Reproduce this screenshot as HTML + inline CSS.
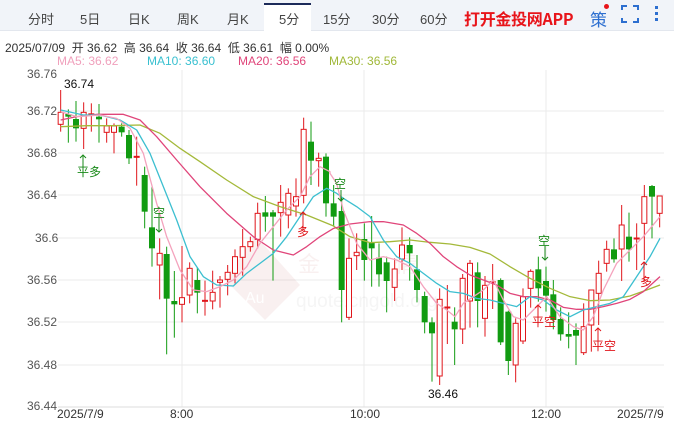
<!DOCTYPE html>
<html><head><meta charset="utf-8"><style>
*{margin:0;padding:0;box-sizing:border-box}
body{width:674px;height:422px;background:#fff;font-family:"Liberation Sans","Noto Sans CJK SC",sans-serif;position:relative;overflow:hidden}
.bar{position:absolute;left:0;top:0;width:674px;height:31px;background:#f1f4f9;border-bottom:1px solid #e3e7ee}
.t{position:absolute;top:9px;font-size:13px;color:#444}
.sel{position:absolute;left:264px;top:3px;width:47px;height:29px;background:#fff;border-top:2px solid #1d2b5a}
.app{position:absolute;left:464px;top:6px;font-size:16px;font-weight:bold;color:#e8141a;font-family:"Noto Sans CJK SC",sans-serif;letter-spacing:-0.3px}
.info{position:absolute;left:5px;top:39px;font-size:12px;color:#333}
.ma{position:absolute;top:54px;font-size:12px}
svg{position:absolute;left:0;top:0}
</style></head><body>
<div class="bar"></div>
<div class="sel"></div>
<div class="t">分时</div>
<div class="t">5日</div>
<div class="t">日K</div>
<div class="t">周K</div>
<div class="t">月K</div>
<div class="t">5分</div>
<div class="t">15分</div>
<div class="t">30分</div>
<div class="t">60分</div>
<div class="app">打开金投网APP</div>
<div class="t" style="left:590px;top:6px;font-size:17px;color:#2d6fd0">策</div>
<div style="position:absolute;left:604px;top:4px;width:5px;height:5px;border-radius:50%;background:#e8141a"></div>
<svg width="674" height="422" id="s"></svg>
<div class="info">2025/07/09&nbsp; 开 36.62&nbsp; 高 36.64&nbsp; 收 36.64&nbsp; 低 36.61&nbsp; 幅 0.00%</div>
<div class="ma" style="left:57px;color:#f0a0bc">MA5: 36.62</div>
<div class="ma" style="left:147px;color:#38c0d0">MA10: 36.60</div>
<div class="ma" style="left:238px;color:#e0457a">MA20: 36.56</div>
<div class="ma" style="left:329px;color:#a0b838">MA30: 36.56</div>
<script>
var s=document.getElementById('s'),h='';
var tabs=document.querySelectorAll('.t');
var xs=[28,80,128,177,227,279,323,372,420];
for(var i=0;i<9;i++)tabs[i].style.left=xs[i]+'px';
h+='<g stroke="#2d6fd0" stroke-width="2" fill="none"><path d="M622 10v-4h5M633 6h5v4M638 18v4h-5M627 22h-5v-4"/></g>';
h+='<g fill="#2d6fd0"><rect x="655" y="6" width="3" height="3"/><rect x="655" y="12" width="3" height="3"/><rect x="655" y="18" width="3" height="3"/></g>';
var gy=[111,153,195,238,280,322,365];
gy.forEach(function(y){h+='<line x1="58" x2="664" y1="'+y+'" y2="'+y+'" stroke="#ebebeb"/>'});
[182,364,546].forEach(function(x){h+='<line x1="'+x+'" x2="'+x+'" y1="70" y2="407" stroke="#ebebeb"/>'});
h+='<line x1="58" x2="664" y1="407" y2="407" stroke="#ddd"/>';
var lab=['36.76','36.72','36.68','36.64','36.6','36.56','36.52','36.48','36.44'],ly=[74,111,153,195,238,280,322,365,406];
lab.forEach(function(t,i){h+='<text x="'+(t.length<5?35:27)+'" y="'+(ly[i]+4)+'" font-size="12" fill="#555">'+t+'</text>'});
[['2025/7/9',57],['8:00',170],['10:00',350],['12:00',531],['2025/7/9',617]].forEach(function(a){h+='<text x="'+a[1]+'" y="418" font-size="12" fill="#333">'+a[0]+'</text>'});
h+='<g opacity="0.08"><path d="M255 235 L300 285 L265 320 L225 280Z" fill="#c0504d"/><text x="245" y="303" font-size="16" fill="#fff">Au</text><text x="298" y="272" font-size="22" fill="#c0504d">金</text><text x="395" y="272" font-size="22" fill="#c0504d">情</text><text x="296" y="307" font-size="19" fill="#888">quote.cngold.org</text></g>';
var c=[[182,127,163,60,185,'r'],[205,132,140,118,218,'g'],[228,147,175,93,215,'g'],[251,127,175,97,237,'r'],[274,130,137,100,185,'rf'],[297,140,148,102,218,'g'],[320,168,187,145,218,'r'],[342,168,187,160,250,'r'],[365,170,187,160,200,'g'],[387,195,265,180,282,'g'],[410,259,261,200,347,'r'],[434,315,425,290,475,'g'],[456,472,535,345,590,'g'],[479,550,585,505,688,'r'],[500,552,686,530,853,'g'],[523,693,703,603,803,'g'],[546,683,703,528,757,'r'],[569,595,675,577,700,'r'],[592,630,668,592,730,'g'],[615,691,693,632,737,'r'],[638,667,693,602,718,'r'],[660,630,637,618,713,'r'],[683,607,628,585,676,'r'],[705,560,610,538,640,'r'],[728,530,562,477,617,'r'],[751,515,530,500,545,'r'],[773,430,508,398,535,'r'],[796,427,440,378,485,'g'],[819,427,440,420,632,'g'],[842,397,428,345,500,'r'],[865,370,435,355,475,'r'],[888,380,408,325,440,'r'],[911,178,376,143,400,'r'],[933,215,272,155,345,'g'],[956,265,272,248,350,'r'],[978,260,400,250,440,'g'],[1001,400,440,345,470,'g']];
var c3=[[35,423,660,380,757,'g'],[57,565,742,505,750,'r'],[80,547,557,490,600,'r'],[103,507,570,460,632,'g'],[125,517,535,438,650,'g'],[147,563,613,520,650,'g'],[170,577,633,560,727,'g'],[194,597,652,565,693,'r'],[216,525,567,472,600,'r'],[239,525,550,502,632,'g'],[261,598,660,555,697,'g'],[284,678,757,665,790,'g'],[306,757,790,742,935,'g'],[329,688,918,655,945,'r'],[352,711,713,645,822,'r'],[374,755,778,712,885,'g'],[398,625,777,612,822,'r'],[420,580,693,570,773,'r'],[443,607,693,577,772,'g'],[465,646,745,618,800,'r'],[488,635,637,582,717,'r'],[512,630,817,625,825,'g'],[535,725,873,722,915,'g'],[557,760,885,745,937,'r'],[579,680,813,655,822,'r'],[602,604,655,598,713,'r'],[625,598,655,560,695,'g'],[648,633,677,590,725,'g'],[670,673,750,630,778,'g'],[692,747,793,712,812,'g'],[716,792,800,727,835,'g'],[738,780,797,760,885,'g'],[761,770,848,700,855,'r'],[784,660,765,660,845,'r'],[806,610,670,572,765,'r'],[830,538,580,512,605,'r'],[852,538,568,505,578,'g'],[875,465,537,405,633,'r'],[897,500,538,428,575,'g'],[920,504,506,460,600,'r'],[943,380,460,345,570,'r'],[966,348,380,345,505,'g'],[989,378,430,378,472,'r']];
c3.forEach(function(a){a[0]=(330+a[0]/3)*3;});
function Y(v){return 70+v/3}
c.concat(c3).forEach(function(a){
 var x=a[0]/3,col=a[5]=='g'?'#119b11':'#e0161b',bt=Y(a[1]),bb=Y(a[2]);if(bb-bt<1)bb=bt+1;
 h+='<line x1="'+x+'" x2="'+x+'" y1="'+Y(a[3])+'" y2="'+Y(a[4])+'" stroke="'+col+'" stroke-width="1"/>';
 if(a[5]=='g'||a[5]=='rf')h+='<rect x="'+(x-3)+'" y="'+bt+'" width="6" height="'+(bb-bt)+'" fill="'+col+'"/>';
 else h+='<rect x="'+(x-2.5)+'" y="'+bt+'" width="5" height="'+(bb-bt)+'" fill="#fff" stroke="'+col+'"/>';
});
function L(p2,p3,col){var pts=[];p2.forEach(function(p){pts.push((p[0]/3)+','+Y(p[1]))});p3.forEach(function(p){pts.push((330+p[0]/3)+','+Y(p[1]))});
 h+='<polyline points="'+pts.join(' ')+'" fill="none" stroke="'+col+'" stroke-width="1.3" stroke-linejoin="round"/>';}
L([[182,170],[260,167],[340,167],[420,165],[480,190],[540,235],[600,275],[680,330],[760,380],[840,410],[920,435],[1001,468]],[[20,475],[60,500],[120,518],[180,515],[240,510],[300,517],[360,522],[420,532],[480,552],[540,590],[600,625],[660,655],[720,680],[780,692],[840,690],[900,678],[950,660],[990,645]],'#a4b93a');
L([[182,150],[230,140],[290,133],[370,133],[420,150],[470,200],[530,270],[600,350],[680,430],[760,500],[820,540],[880,555],[920,530],[960,500],[1001,475]],[[60,462],[120,455],[160,455],[220,465],[260,490],[300,520],[340,560],[380,590],[420,615],[460,630],[500,645],[540,670],[580,680],[620,680],[660,690],[700,712],[740,718],[780,718],[820,710],[860,700],[900,688],[940,665],[990,620]],'#e0457a');
L([[182,120],[250,135],[300,135],[360,150],[410,180],[450,250],[490,350],[530,450],[570,560],[610,620],[650,645],[700,648],[740,610],[780,580],[820,550],[860,500],[900,440],[940,380],[980,355],[1001,365]],[[20,370],[40,385],[80,410],[120,440],[160,510],[200,560],[240,580],[280,610],[320,640],[360,665],[400,670],[440,685],[480,690],[520,700],[560,710],[600,680],[640,690],[680,720],[720,740],[760,720],[800,710],[840,700],[880,680],[920,620],[960,560],[990,505]],'#3cbfd0');
L([[182,125],[230,140],[300,135],[350,145],[390,175],[430,250],[470,400],[500,500],[540,600],[580,660],[620,665],[660,650],[700,630],[740,590],[780,520],[820,470],[860,420],[900,380],[930,320],[960,290],[990,305]],[[0,310],[20,340],[40,420],[80,520],[120,570],[160,560],[200,570],[240,590],[280,650],[320,700],[350,720],[375,740],[400,700],[430,680],[460,660],[490,630],[520,690],[550,740],[580,750],[610,720],[650,680],[690,740],[730,770],[760,780],[790,740],[820,660],[860,580],[900,540],[940,500],[990,440]],'#f4a3bd');
h+='<text x="64" y="88" font-size="12" fill="#111">36.74</text><text x="428" y="398" font-size="12" fill="#111">36.46</text>';
function up(x,y1,y2,col){h+='<path d="M'+x+' '+y2+'V'+y1+'M'+(x-3)+' '+(y1+3)+'L'+x+' '+y1+'L'+(x+3)+' '+(y1+3)+'" stroke="'+col+'" fill="none"/>'}
function dn(x,y1,y2,col){h+='<path d="M'+x+' '+y1+'V'+y2+'M'+(x-3)+' '+(y2-3)+'L'+x+' '+y2+'L'+(x+3)+' '+(y2-3)+'" stroke="'+col+'" fill="none"/>'}
var G='#1a8a1a',R='#e0161b';
up(83,155,177,G);h+='<text x="77" y="176" font-size="12" fill="'+G+'">平多</text>';
h+='<text x="153" y="217" font-size="12" fill="'+G+'">空</text>';dn(159,218,232,G);
up(303,212,230,R);h+='<text x="297" y="236" font-size="12" fill="'+R+'">多</text>';
h+='<text x="334" y="188" font-size="12" fill="'+G+'">空</text>';dn(341,190,201,G);
h+='<text x="538" y="245" font-size="12" fill="'+G+'">空</text>';dn(545,246,260,G);
up(538,305,325,R);h+='<text x="532" y="326" font-size="12" fill="'+R+'">平空</text>';
up(598,328,350,R);h+='<text x="592" y="350" font-size="12" fill="'+R+'">平空</text>';
up(644,262,282,R);h+='<text x="640" y="286" font-size="12" fill="'+R+'">多</text>';
s.innerHTML=h;
</script>
</body></html>
